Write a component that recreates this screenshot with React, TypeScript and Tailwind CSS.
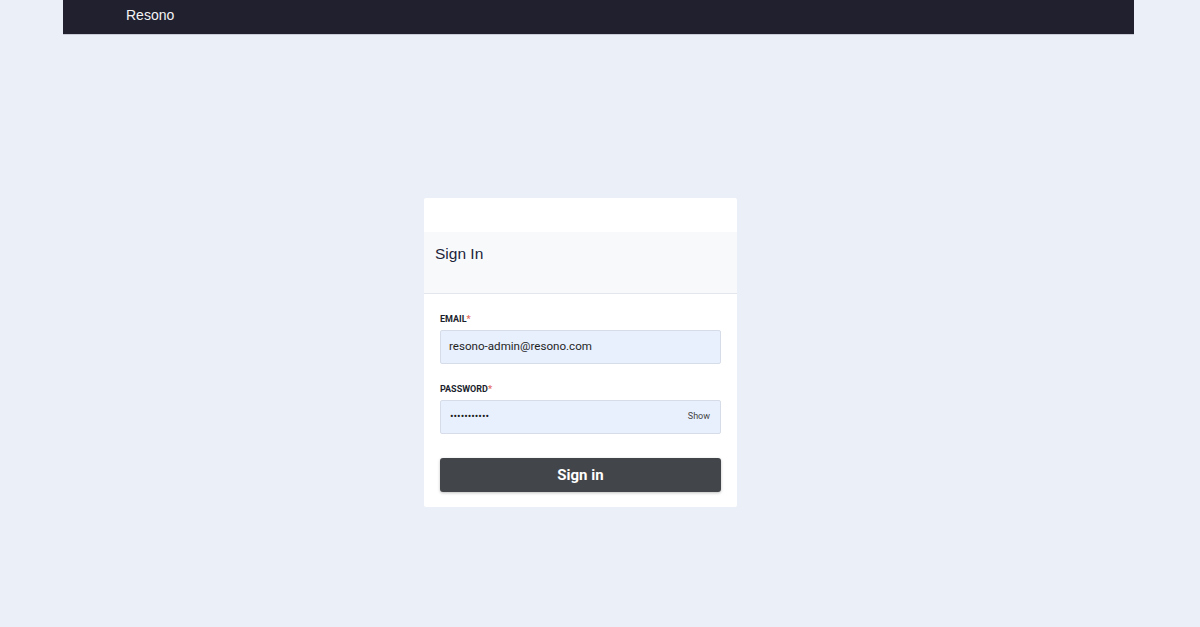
export default function App() {
  return (
    <div className="min-h-[627px] w-[1200px] bg-[#ebeff7]" style={{ fontFamily: "Roboto, 'Liberation Sans', sans-serif" }}>
      <div className="ml-[63px] flex h-[35px] w-[1071px] items-center border-b border-[#c9ccd6] bg-[#20202f] pl-[63px] pb-[4px]">
        <span className="text-[14px] text-[#f3f3f5]" style={{ fontFamily: "'Liberation Sans', Arial, sans-serif" }}>Resono</span>
      </div>
      <div className="ml-[424px] mt-[163px] w-[313px] rounded-[2px] bg-white pt-[34px] pb-[15px]">
        <div className="flex h-[62px] items-start border-b border-[#e3e6ec] bg-[#f8f9fb] px-[11px] pt-[10px]">
          <span className="text-[15.5px] text-[#1c1f3a]" style={{ fontFamily: "'Liberation Sans', Arial, sans-serif" }}>Sign In</span>
        </div>
        <div className="px-[16px] pt-[19px]">
          <div className="text-[9px] font-bold leading-[12px] text-[#1c1f2e]">
            EMAIL<span className="text-[#e56a5b]">*</span>
          </div>
          <div className="mt-[5px] flex h-[34px] items-center rounded-[2px] border border-[#d7dde8] bg-[#e8f0fe] px-[8px] text-[11.6px] text-[#1f1f1f]">
            resono-admin@resono.com
          </div>
          <div className="mt-[19px] text-[9px] font-bold leading-[12px] text-[#1c1f2e]">
            PASSWORD<span className="text-[#e56a5b]">*</span>
          </div>
          <div className="mt-[5px] flex h-[34px] items-center justify-between rounded-[2px] border border-[#d7dde8] bg-[#e8f0fe] pl-[9px] pr-[10px]">
            <span className="text-[10.5px] text-[#1f1f1f]">•••••••••••</span>
            <span className="text-[9px] text-[#444]">Show</span>
          </div>
          <button className="mt-[24px] flex h-[34px] w-full items-center justify-center rounded-[3px] bg-[#424549] text-[15px] font-bold text-white shadow-[0_1px_3px_rgba(0,0,0,0.25)]">
            Sign in
          </button>
        </div>
      </div>
    </div>
  );
}
